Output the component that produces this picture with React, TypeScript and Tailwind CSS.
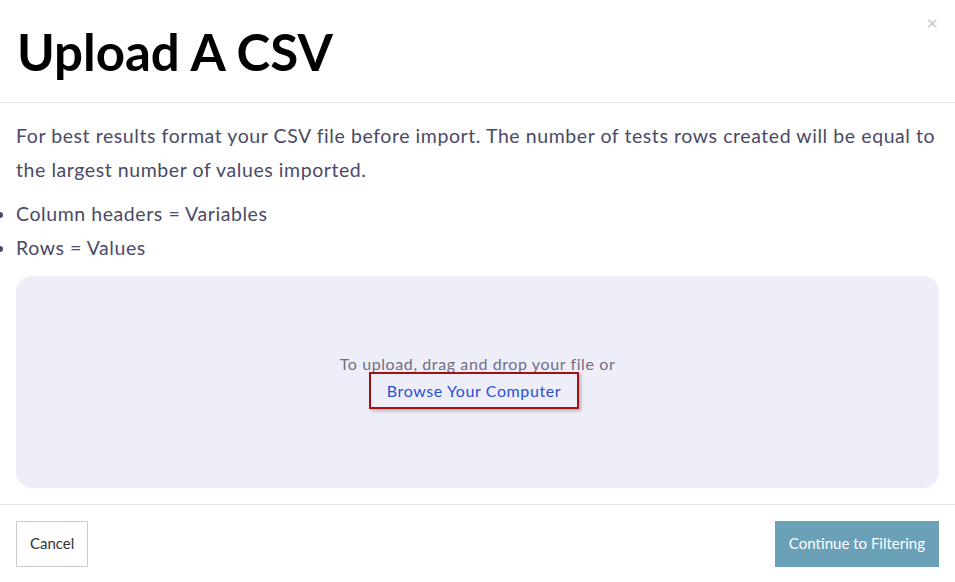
export default function App() {
  return (
    <div className="relative min-h-[582px] bg-white text-[#4a4a66]" style={{ fontFamily: "Lato, 'Noto Sans', sans-serif" }}>
      <button className="absolute right-[17px] top-[12px] text-[20px] leading-none text-[#c8c8c8]">×</button>
      <header className="border-b border-[#e5e5e5] px-[17px] pt-[18px] pb-[16px]">
        <h1 className="text-[51px] font-bold leading-[68px] text-black">Upload A CSV</h1>
      </header>
      <main className="px-4 pt-[16px] pb-4">
        <p className="text-[19.5px] leading-[34px] tracking-[0.57px]">
          For best results format your CSV file before import. The number of tests rows created will be equal to the largest number of values imported.
        </p>
        <ul className="mt-[10px] list-disc list-outside pl-0 text-[19.5px] leading-[34px] tracking-[0.57px]">
          <li>Column headers = Variables</li>
          <li>Rows = Values</li>
        </ul>
        <div className="mt-[11px] flex h-[212px] flex-col items-center justify-center rounded-[16px] bg-[#eeeef8]">
          <p className="text-[16px] leading-[18px] tracking-[0.6px] text-[#707085]">To upload, drag and drop your file or</p>
          <button className="-mt-[1px] mr-[7px] border-2 border-[#a40f16] px-[16px] py-[5px] text-[16px] leading-[23px] tracking-[0.6px] text-[#2b4fd6] shadow-[2px_2px_3px_rgba(0,0,0,0.25)]">
            Browse Your Computer
          </button>
        </div>
      </main>
      <footer className="flex items-center justify-between border-t border-[#e5e5e5] px-4 pt-4">
        <button className="h-[46px] border border-[#cccccc] px-[13px] pb-[2px] text-[15px] text-[#333333]">Cancel</button>
        <button className="h-[46px] bg-[#6aa1b9] px-[14px] pb-[2px] text-[15px] text-white">Continue to Filtering</button>
      </footer>
    </div>
  );
}
